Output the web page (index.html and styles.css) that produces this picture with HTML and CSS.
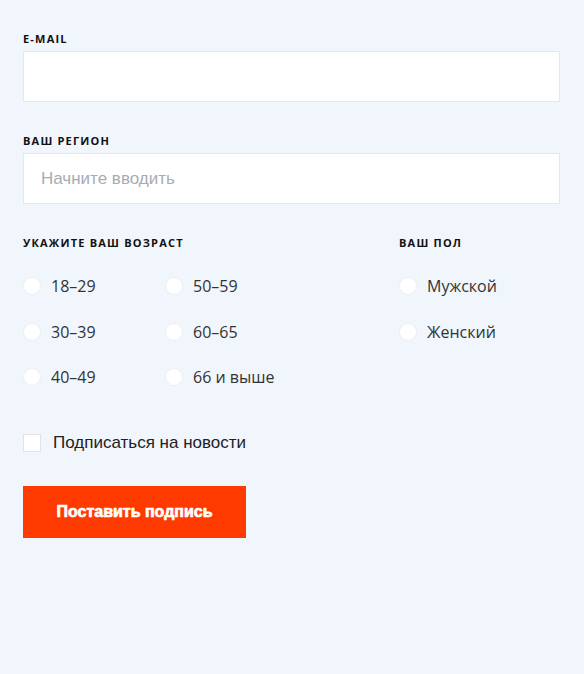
FILE: index.html
```html
<!DOCTYPE html>
<html lang="ru">

<head>
    <meta charset="UTF-8">
    <meta name="viewport" content="width=device-width, initial-scale=1.0">
    <title>Подпись</title>
    <link rel="stylesheet" href="styles.css">
</head>

<body>
    <form class="sign-form">
        <div class="field">
            <label class="field-label" for="email">E-mail</label>
            <input class="field-input" type="text" id="email">
        </div>
        <div class="field">
            <label class="field-label" for="region">Ваш регион</label>
            <input class="field-input" type="text" id="region" placeholder="Начните вводить">
        </div>

        <div class="groups">
            <div class="group group-age">
                <div class="field-label">Укажите ваш возраст</div>
                <div class="options options-age">
                    <label class="option"><span class="radio"></span>18–29</label>
                    <label class="option"><span class="radio"></span>50–59</label>
                    <label class="option"><span class="radio"></span>30–39</label>
                    <label class="option"><span class="radio"></span>60–65</label>
                    <label class="option"><span class="radio"></span>40–49</label>
                    <label class="option"><span class="radio"></span>66 и выше</label>
                </div>
            </div>
            <div class="group group-sex">
                <div class="field-label">Ваш пол</div>
                <div class="options">
                    <label class="option"><span class="radio"></span>Мужской</label>
                    <label class="option"><span class="radio"></span>Женский</label>
                </div>
            </div>
        </div>

        <label class="subscribe"><span class="checkbox"></span>Подписаться на новости</label>

        <button class="submit" type="button">Поставить подпись</button>
    </form>
</body>

</html>
```

FILE: styles.css
```css
body {
    margin: 0;
    background-color: #f1f5fc;
    font-family: "Open Sans", sans-serif;
    color: #333;
}

.sign-form {
    width: 537px;
    padding: 31px 0 0 23px;
}

.field {
    margin-bottom: 31px;
}

.field-label {
    display: block;
    font-size: 11px;
    font-weight: 700;
    letter-spacing: 1.2px;
    text-transform: uppercase;
    color: #111;
    line-height: 15px;
    margin-bottom: 5px;
}

.field-input {
    display: block;
    box-sizing: border-box;
    width: 100%;
    height: 51px;
    margin: 0;
    border: 1px solid #e4e8ee;
    background: #fff;
    padding: 0 17px;
    font-family: "Liberation Sans", Arial, sans-serif;
    font-size: 17px;
    color: #333;
    outline: none;
}

.field-input::placeholder {
    color: #a7acb4;
}

.groups {
    display: flex;
    margin-top: 3px;
}

.group-age {
    width: 376px;
}

.group-age .field-label,
.group-sex .field-label {
    margin-bottom: 25px;
}

.options {
    display: flex;
    flex-direction: column;
    gap: 23.5px;
}

.options-age {
    display: grid;
    grid-template-columns: 142px 1fr;
    column-gap: 0;
    row-gap: 23.5px;
}

.option {
    display: flex;
    align-items: center;
    gap: 10px;
    font-size: 16px;
    line-height: 22px;
    color: #333;
}

.radio {
    width: 16px;
    height: 16px;
    border-radius: 50%;
    background: #fff;
    border: 1px solid #eceff4;
}

.subscribe {
    display: flex;
    align-items: center;
    gap: 12px;
    margin-top: 44px;
    font-family: "Liberation Sans", Arial, sans-serif;
    font-size: 17px;
    line-height: 22px;
    color: #222;
}

.checkbox {
    width: 16px;
    height: 16px;
    background: #fff;
    border: 1px solid #e1e5eb;
}

.submit {
    display: block;
    margin-top: 32px;
    width: 223px;
    height: 52px;
    border: none;
    background: #fe3a00;
    color: #fff;
    font-family: "Liberation Sans", Arial, sans-serif;
    font-size: 16px;
    font-weight: 700;
    letter-spacing: 0;
    -webkit-text-stroke: 0.7px #fff;
}
```
